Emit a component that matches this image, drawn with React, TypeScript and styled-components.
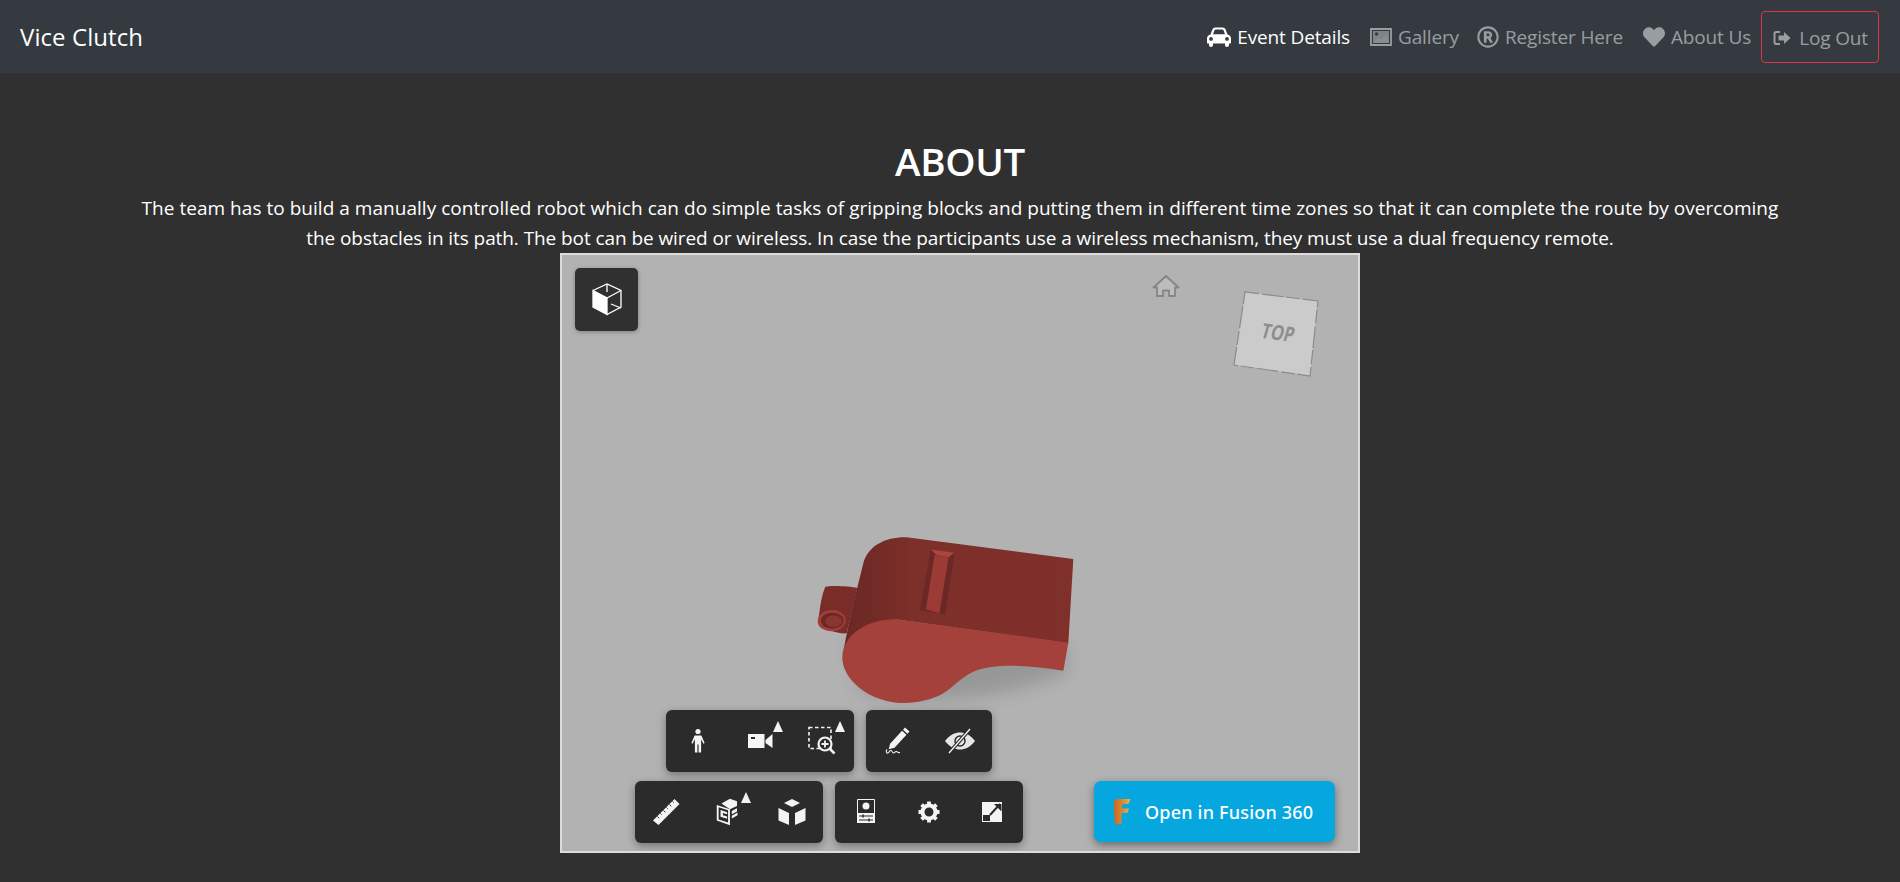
import React from "react";
import styled, { createGlobalStyle } from "styled-components";
import { FaRegRegistered, FaHeart } from "react-icons/fa";

const Global = createGlobalStyle`
  html, body { margin: 0; padding: 0; background: #303030; }
  body { font-family: "Open Sans", "Noto Sans", "Liberation Sans", sans-serif; overflow: hidden; }
`;
const Page = styled.div`height: 882px; background: #303030; color: #fff;`;
const NavBar = styled.nav`
  height: 73px; background: #343a40; display: flex; align-items: center; justify-content: space-between;
  padding: 0 21px 0 20px; box-sizing: border-box;
`;
const Brand = styled.a`font-size: 24px; color: #fff; letter-spacing: 0.08px;`;
const NavLinks = styled.div`display: flex; align-items: center;`;
const NavLink = styled.a<{ $active?: boolean; $tight?: boolean }>`
  display: flex; align-items: center; gap: 6px; font-size: 19px; letter-spacing: -0.14px; height: 52px;
  padding: 0 10px 0 ${(p) => (p.$tight ? "8px" : "10px")};
  color: ${(p) => (p.$active ? "#fff" : "rgba(255,255,255,.5)")};
  svg { font-size: 22px; flex: none; }
`;
const LogoutLink = styled(NavLink)`
  border: 1px solid #dc3545; border-radius: 4px; padding: 2px 10px 0 11px; box-sizing: border-box; gap: 8px;
  svg { font-size: 18px; }
`;
const Main = styled.main`
  display: flex; flex-direction: column; align-items: center; padding: 63px 0 0 20px; text-align: center;
`;
const Title = styled.h1`font-size: 38.500px; line-height: 50px; font-weight: 600; margin: 0; letter-spacing: -0.3px;`;
const Lead = styled.p`font-size: 19px; line-height: 30px; margin: 7px 0 0; letter-spacing: 0.03px; white-space: nowrap; height: 60px;`;
const LeadTail = styled.span`letter-spacing: -0.08px;`;
const Viewer = styled.div`
  position: relative; width: 800px; height: 600px; box-sizing: border-box; border: 2px solid #dcdcdc; margin-top: 0;
  background: #b2b2b2; overflow: hidden;
`;
const Canvas = styled.svg`position: absolute; inset: 0; width: 796px; height: 596px;`;
const CubeButton = styled.div`
  position: absolute; left: 13px; top: 13px; width: 63px; height: 63px; border-radius: 5px; background: #303030;
  display: flex; align-items: center; justify-content: center; box-shadow: 0 1px 4px rgba(0,0,0,.3);
`;
const ToolStack = styled.div`
  position: absolute; left: 73px; bottom: 8px; width: 388px; display: flex; flex-direction: column; align-items: center; gap: 9px;
`;
const ToolRow = styled.div`display: flex; gap: 12px;`;
const ToolGroup = styled.div`
  display: flex; height: 62px; border-radius: 6px; background: #2b2b2b; box-shadow: 0 3px 8px rgba(0,0,0,.35);
`;
const ToolButton = styled.div`
  position: relative; width: 62.67px; display: flex; align-items: center; justify-content: center;
`;
const Caret = styled.span`
  position: absolute; right: 9px; top: 11px; width: 0; height: 0;
  border-left: 5.5px solid transparent; border-right: 5.5px solid transparent; border-bottom: 11px solid #f2f2f2;
`;
const FusionButton = styled.div`
  position: absolute; right: 23px; bottom: 9px; width: 241px; height: 61px; border-radius: 7px; background: #06a7df;
  display: flex; align-items: center; gap: 14px; padding-left: 19px; box-sizing: border-box;
  box-shadow: 0 3px 9px rgba(0,0,0,.4); color: #fff; font: 500 18px "Noto Sans", Roboto, sans-serif; letter-spacing: 0.2px;
`;

const CarIcon = () => (
  <svg width="24" height="22" viewBox="0 0 24 22" fill="currentColor" fillRule="evenodd">
    <path d="M3.500 8.500L5.400 3.600C5.900 2.300 7 1.500 8.400 1.500h7.200c1.400 0 2.500.8 3 2.100l1.900 4.900C22.600 9 24 10.500 24 12.500v4c0 .6-.4 1-1 1h-1v1.500c0 1.200-.9 2-2 2s-2-.8-2-2v-1.500H6v1.500c0 1.200-.9 2-2 2s-2-.8-2-2v-1.500H1c-.6 0-1-.4-1-1v-4C0 10.500 1.400 9 3.500 8.500zM6 8.200h12l-1.500-4c-.2-.5-.6-.7-1.100-.7H8.600c-.5 0-.9.200-1.100.7zM4 11a1.900 1.900 0 1 0 0 3.800A1.900 1.900 0 1 0 4 11zM20 11a1.900 1.900 0 1 0 0 3.800A1.900 1.900 0 1 0 20 11z" />
  </svg>
);
const ImageIcon = () => (
  <svg width="22" height="18" viewBox="0 0 22 18" fill="currentColor">
    <path d="M1 1h20v16H1z" fill="none" stroke="currentColor" strokeWidth="1.800" />
    <path d="M3 3h16v12H3z" opacity=".75" />
    <path d="M3 15l5-6 3 3 4-5 4 5v3z" fill="#8a8d90" />
    <circle cx="6.500" cy="6" r="1.700" fill="#343a40" />
  </svg>
);
const LogoutIcon = () => (
  <svg width="18" height="16" viewBox="0 0 18 16" fill="currentColor">
    <path d="M7 1H3C1.500 1 .500 2 .500 3.500v9C.500 14 1.500 15 3 15h4v-2H3.500c-.5 0-1-.4-1-1V4c0-.6.500-1 1-1H7z" />
    <path d="M11 2l6.500 6-6.500 6v-3.500H5.500v-5H11z" />
  </svg>
);

const W = "#f4f4f4";
const Person = () => (
  <svg width="32" height="32" viewBox="0 0 32 32" fill={W}>
    <circle cx="16" cy="6.500" r="2.600" />
    <path d="M12.600 10.500h6.800l3.200 7.500-1.200.7-2.300-4.500v13.300h-2.500v-8h-1.200v8h-2.500V14.200l-2.300 4.500-1.200-.7z" />
  </svg>
);
const Camera = () => (
  <svg width="32" height="32" viewBox="0 0 32 32" fill={W}>
    <path d="M4 9h16.500v14H4z" />
    <path d="M21.500 15l7-6v14l-7-5z" />
    <rect x="7" y="12" width="4" height="2" fill="#2b2b2b" />
  </svg>
);
const ZoomFit = () => (
  <svg width="34" height="34" viewBox="0 0 34 34" fill="none" stroke={W}>
    <path d="M3 3.500h22v21H3z" strokeWidth="1.600" strokeDasharray="3.500 2.500" />
    <circle cx="19" cy="20" r="6.500" fill="#2b2b2b" strokeWidth="2.200" />
    <path d="M15.500 20h7M19 16.500v7" strokeWidth="1.800" />
    <path d="M24 25l4.500 4.500" strokeWidth="2.500" />
  </svg>
);
const Pencil = () => (
  <svg width="32" height="32" viewBox="0 0 32 32" fill={W}>
    <path d="M23 2.500l4.500 4-2 2.200-4.500-4z" />
    <path d="M20 5.700l4.500 4-12 13-5.800 1.500 1.400-5.500z" />
    <path d="M5 24.500c-1.500 1.500-.5 4 1 3.500s1.500-3 3-2.500 1 2.500 2.500 2.500 1.500-2 3-1.500 1 1.500 3.500 1" fill="none" stroke={W} strokeWidth="1.100" />
  </svg>
);
const EyeOff = () => (
  <svg width="34" height="34" viewBox="0 0 34 34" fill="none">
    <path d="M2 17C7 10.500 12 8.500 17 8.500S27 10.500 32 17C27 23.500 22 25.500 17 25.500S7 23.500 2 17z" fill="#e6e6e6" />
    <circle cx="17" cy="17" r="5" stroke="#2b2b2b" strokeWidth="1.500" />
    <path d="M6 29L27 5" stroke="#2b2b2b" strokeWidth="3.500" />
    <path d="M6 29L27 5" stroke={W} strokeWidth="1.400" />
  </svg>
);
const Ruler = () => (
  <svg width="32" height="32" viewBox="0 0 32 32">
    <path d="M24.500 3L29.500 8 8.500 29 3 24.500z" fill={W} />
    <path d="M7.500 20.500l1.800 1.800M10.500 17.500l1.200 1.200M13.500 14.500l1.800 1.800M16.500 11.500l1.200 1.200M19.500 8.500l1.800 1.800M22.500 5.500l1.200 1.200" stroke="#2b2b2b" strokeWidth="1" />
  </svg>
);
const Explode = () => (
  <svg width="32" height="32" viewBox="0 0 34 34" fill={W}>
    <path d="M4 9.500l14 4.500v17L4 26z" />
    <path d="M6 12l10 3.200v13L6 25z" fill="#2b2b2b" />
    <path d="M8 15l7 2.200v2.300l-4.500-1.400v2.400l4.500 1.400v2.300l-7-2.200z" />
    <path d="M9 8l9-5 7.500 2.500v5L18 14z" />
    <path d="M20 16l5.500-3v3.500L20 19.500z" />
    <path d="M20 21l6-3.500v3L20 24z" />
  </svg>
);
const ExplodeCube = () => (
  <svg width="32" height="32" viewBox="0 0 32 32" fill={W}>
    <path d="M16 3l8 4-8 4-8-4z" />
    <path d="M2.500 12l10.500 5v12L2.500 24.500z" />
    <path d="M29.500 12L19 17v12l10.500-4.500z" />
  </svg>
);
const Browser = () => (
  <svg width="32" height="32" viewBox="0 0 32 32" fill={W}>
    <path d="M7.500 3.500h17v23h-17z" fill="none" stroke={W} strokeWidth="1" />
    <path d="M7 17h18v10H7z" />
    <circle cx="16" cy="10" r="3.500" />
    <path d="M9 20h14M9 24h14" stroke="#2b2b2b" strokeWidth="1" />
    <path d="M13 18.500v3M19 22.500v3" stroke="#2b2b2b" strokeWidth="1.500" />
  </svg>
);
const Gear = () => (
  <svg width="32" height="32" viewBox="0 0 32 32">
    <circle cx="16" cy="16" r="6.500" fill="none" stroke={W} strokeWidth="4" />
    <g stroke={W} strokeWidth="3.800">
      <path d="M16 5.500v4M16 22.500v4M5.500 16h4M22.500 16h4M8.600 8.600l2.800 2.800M20.600 20.600l2.800 2.800M8.600 23.400l2.800-2.800M20.600 11.400l2.800-2.800" />
    </g>
  </svg>
);
const Fullscreen = () => (
  <svg width="32" height="32" viewBox="0 0 32 32">
    <path d="M6 6h20v20H6z" fill={W} />
    <path d="M7 19h7v6H7z" fill="#2b2b2b" />
    <path d="M14 19l10-11" stroke="#2b2b2b" strokeWidth="2" />
    <path d="M18 8h7.500v7.500z" fill="#2b2b2b" />
  </svg>
);
const CubeIcon = () => (
  <svg width="34" height="36" viewBox="0 0 34 36" fill="none" stroke="#fff" strokeWidth="1.300">
    <path d="M3 8.500L17 16v16.500L3 25z" fill="#fff" />
    <path d="M3 8.500L17 2l14 6.500v16.500L17 32.500" />
    <path d="M17 2v8M17 16l14-7.500M21 22l10 4" />
  </svg>
);
const FusionLogo = () => (
  <svg width="18" height="26" viewBox="0 0 18 26">
    <defs>
      <linearGradient id="fu" x1="0" x2="1" y1="0" y2="0">
        <stop offset="0" stopColor="#c96a1e" />
        <stop offset=".55" stopColor="#dd8a35" />
        <stop offset="1" stopColor="#eeb25e" />
      </linearGradient>
    </defs>
    <path d="M1 3C1 1 3 0 5 0h12.500l-2 5H9.500L8.800 9.500H16l-1.500 4.500H8.500c-.5 4 0 8 .5 10-2 1-4 1.500-6.500 2C1.500 20 .5 10 1 3z" fill="url(#fu)" />
  </svg>
);

const Scene = () => (
  <Canvas viewBox="562 255 796 596" xmlns="http://www.w3.org/2000/svg">
    <defs>
      <linearGradient id="bd" x1="0" x2="1" y1="0" y2="0">
        <stop offset="0" stopColor="#692824" />
        <stop offset=".3" stopColor="#7d2f29" />
        <stop offset="1" stopColor="#80302b" />
      </linearGradient>
      <filter id="sh" x="-30%" y="-30%" width="160%" height="160%"><feGaussianBlur stdDeviation="9" /></filter>
    </defs>
    <path d="M860 690C900 705 990 705 1068 672L1062 640 850 640z" fill="#777" opacity=".45" filter="url(#sh)" />
    <path d="M1166 276l12.500 11.500h-3.500v8.500h-6v-5.500h-6v5.500h-6v-8.500h-3.500z" fill="#bcbcbc" stroke="#858585" strokeWidth="1.800" strokeLinejoin="round" />
    <path d="M1245 292L1318 301 1310 376 1234 365z" fill="#cbcbcb" stroke="#8b8b8b" strokeWidth="1.200" strokeDasharray="14 3 22 2" />
    <text x="0" y="0" transform="translate(1276 340) rotate(8) skewX(-8) scale(.82 1.050)" fontFamily="Open Sans, sans-serif" fontWeight="700" fontSize="20" fill="#8e8e8e" textAnchor="middle">TOP</text>
    <g transform="translate(800 520) scale(.3333)">
      <path d="M76 200C90 196 150 198 172 204L140 340C110 342 70 328 55 300 60 260 65 225 76 200z" fill="#7a2d28" />
      <ellipse cx="95" cy="302" rx="42" ry="32" transform="rotate(-4 95 302)" fill="#a03e37" />
      <ellipse cx="97" cy="302" rx="34" ry="24" fill="#6a2824" />
      <ellipse cx="101" cy="304" rx="25" ry="18" fill="#8a3530" />
      <path d="M130 400C140 330 175 190 190 130 205 75 260 50 320 52L820 117 805 370 300 300C230 295 160 330 130 400z" fill="url(#bd)" />
      <path d="M392 88L464 98 436 284 360 270z" fill="#6b2824" />
      <path d="M404 104L446 112 418 280 378 268z" fill="#9c3b35" />
      <path d="M392 88L464 98 445 112 408 104z" fill="#a9453d" />
      <path d="M127 410C130 340 210 295 290 298L805 368 790 452C700 440 600 425 520 455 480 475 460 500 430 520 390 545 320 555 270 545 190 530 125 470 127 410z" fill="#a3413a" />
    </g>
  </Canvas>
);

export default function App() {
  return (
    <Page>
      <Global />
      <NavBar>
        <Brand>Vice Clutch</Brand>
        <NavLinks>
          <NavLink $active><CarIcon />Event Details</NavLink>
          <NavLink><ImageIcon />Gallery</NavLink>
          <NavLink $tight><FaRegRegistered />Register Here</NavLink>
          <NavLink><FaHeart />About Us</NavLink>
          <LogoutLink><LogoutIcon />Log Out</LogoutLink>
        </NavLinks>
      </NavBar>
      <Main>
        <Title>ABOUT</Title>
        <Lead>
          The team has to build a manually controlled robot which can do simple tasks of gripping blocks and putting them in different time zones so that it can complete the route by overcoming<br />
          <LeadTail>the obstacles in its path. The bot can be wired or wireless. In case the participants use a wireless mechanism, they must use a dual frequency remote.</LeadTail>
        </Lead>
        <Viewer>
          <Scene />
          <CubeButton><CubeIcon /></CubeButton>
          <ToolStack>
            <ToolRow>
              <ToolGroup>
                <ToolButton><Person /></ToolButton>
                <ToolButton><Camera /><Caret /></ToolButton>
                <ToolButton><ZoomFit /><Caret /></ToolButton>
              </ToolGroup>
              <ToolGroup>
                <ToolButton><Pencil /></ToolButton>
                <ToolButton><EyeOff /></ToolButton>
              </ToolGroup>
            </ToolRow>
            <ToolRow>
              <ToolGroup>
                <ToolButton><Ruler /></ToolButton>
                <ToolButton><Explode /><Caret /></ToolButton>
                <ToolButton><ExplodeCube /></ToolButton>
              </ToolGroup>
              <ToolGroup>
                <ToolButton><Browser /></ToolButton>
                <ToolButton><Gear /></ToolButton>
                <ToolButton><Fullscreen /></ToolButton>
              </ToolGroup>
            </ToolRow>
          </ToolStack>
          <FusionButton><FusionLogo />Open in Fusion 360</FusionButton>
        </Viewer>
      </Main>
    </Page>
  );
}
